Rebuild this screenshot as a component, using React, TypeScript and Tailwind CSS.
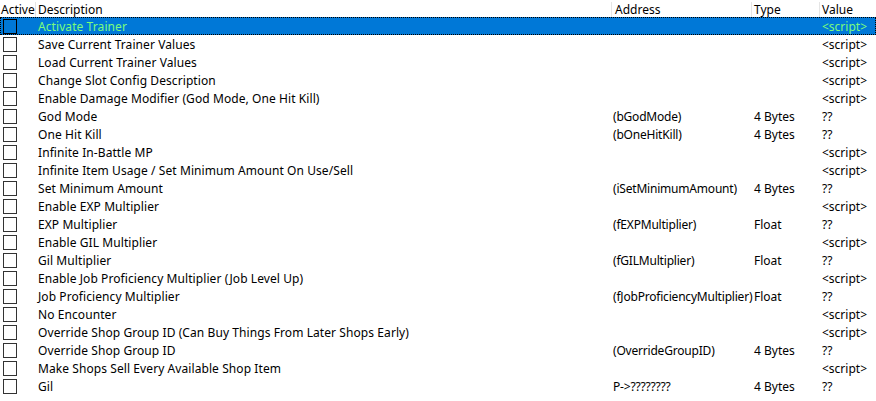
type Row = {
  desc: string
  address?: string
  type?: string
  value: string
}

const rows: Row[] = [
  { desc: "Activate Trainer", value: "<script>" },
  { desc: "Save Current Trainer Values", value: "<script>" },
  { desc: "Load Current Trainer Values", value: "<script>" },
  { desc: "Change Slot Config Description", value: "<script>" },
  { desc: "Enable Damage Modifier (God Mode, One Hit Kill)", value: "<script>" },
  { desc: "God Mode", address: "(bGodMode)", type: "4 Bytes", value: "??" },
  { desc: "One Hit Kill", address: "(bOneHitKill)", type: "4 Bytes", value: "??" },
  { desc: "Infinite In-Battle MP", value: "<script>" },
  { desc: "Infinite Item Usage / Set Minimum Amount On Use/Sell", value: "<script>" },
  { desc: "Set Minimum Amount", address: "(iSetMinimumAmount)", type: "4 Bytes", value: "??" },
  { desc: "Enable EXP Multiplier", value: "<script>" },
  { desc: "EXP Multiplier", address: "(fEXPMultiplier)", type: "Float", value: "??" },
  { desc: "Enable GIL Multiplier", value: "<script>" },
  { desc: "Gil Multiplier", address: "(fGILMultiplier)", type: "Float", value: "??" },
  { desc: "Enable Job Proficiency Multiplier (Job Level Up)", value: "<script>" },
  { desc: "Job Proficiency Multiplier", address: "(fJobProficiencyMultiplier)", type: "Float", value: "??" },
  { desc: "No Encounter", value: "<script>" },
  { desc: "Override Shop Group ID (Can Buy Things From Later Shops Early)", value: "<script>" },
  { desc: "Override Shop Group ID", address: "(OverrideGroupID)", type: "4 Bytes", value: "??" },
  { desc: "Make Shops Sell Every Available Shop Item", value: "<script>" },
  { desc: "Gil", address: "P->????????", type: "4 Bytes", value: "??" },
]

function Checkbox({ selected }: { selected: boolean }) {
  return (
    <div
      className={
        selected
          ? "h-[15px] w-[14px] border border-black bg-[#0078d7]"
          : "h-[15px] w-[14px] border border-[#333333] bg-white"
      }
    />
  )
}

export default function App() {
  return (
    <div
      className="h-[401px] w-[876px] overflow-hidden bg-white text-[12px] leading-none text-black"
      style={{ fontFamily: '"Segoe UI", "Noto Sans", sans-serif' }}
    >
      <div className="flex h-[18px] items-center border-b border-[#e5e5e5] pt-[2px]">
        <div className="flex h-full w-[36px] items-center border-r border-[#e5e5e5] pl-[1px]">Active</div>
        <div className="flex h-full w-[576px] items-center border-r border-[#e5e5e5] pl-[2px]">Description</div>
        <div className="flex h-full w-[140px] items-center border-r border-[#e5e5e5] pl-[3px]">Address</div>
        <div className="flex h-full w-[68px] items-center border-r border-[#e5e5e5] pl-[2px]">Type</div>
        <div className="flex h-full flex-1 items-center pl-[2px]">Value</div>
      </div>
      {rows.map((r, i) => {
        const selected = i === 0
        return (
          <div
            key={i}
            className={
              selected
                ? "-mt-px flex h-[18px] items-center border border-dotted border-black bg-[#0078d7] text-[#7cfc7c]"
                : "flex h-[18px] items-center border border-transparent"
            }
          >
            <div className="flex w-[35px] items-center pl-[2px]">
              <Checkbox selected={selected} />
            </div>
            <div className="w-[576px] whitespace-nowrap pl-[2px] pt-[2px] tracking-[0.08px]">{r.desc}</div>
            <div className="w-[140px] whitespace-nowrap pl-[1px] pt-[2px] tracking-[-0.2px]">{r.address ?? ""}</div>
            <div className="w-[68px] whitespace-nowrap pl-[2px] pt-[2px]">{r.type ?? ""}</div>
            <div className="flex-1 whitespace-nowrap pl-[2px] pt-[2px]">{r.value}</div>
          </div>
        )
      })}
    </div>
  )
}
